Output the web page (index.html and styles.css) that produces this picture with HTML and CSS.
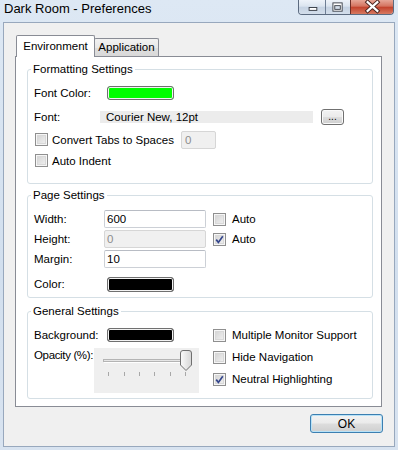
FILE: index.html
```html
<!DOCTYPE html>
<html>
<head>
<meta charset="utf-8">
<link rel="stylesheet" href="styles.css">
</head>
<body>
<div class="window">
  <div class="titlebar">
    <span class="title">Dark Room - Preferences</span>
    <div class="caption">
      <div class="cbtn cmin"><svg width="27" height="15" viewBox="0 0 27 15"><rect x="10.5" y="7.5" width="8" height="3" fill="#fff" stroke="#3a3f48"/></svg></div>
      <div class="cbtn cmax"><svg width="26" height="15" viewBox="0 0 26 15"><rect x="7.5" y="2.5" width="10" height="9" fill="#fff" stroke="#3a3f48"/><rect x="9.5" y="5.5" width="6" height="4" fill="#d5dfeb" stroke="#3a3f48"/></svg></div>
      <div class="cbtn cclose"><svg width="43" height="15" viewBox="0 0 43 15"><path d="M17 2 L27 11 M27 2 L17 11" stroke="#4a2420" stroke-width="4.2" stroke-linecap="square" fill="none"/><path d="M17 2 L27 11 M27 2 L17 11" stroke="#fff" stroke-width="2.2" stroke-linecap="square" fill="none"/></svg></div>
    </div>
  </div>
  <div class="client">
    <div class="tabs">
      <div class="tab tab-active">Environment</div>
      <div class="tab tab-app">Application</div>
    </div>
    <div class="panel">
      <fieldset class="group g-format">
        <legend>Formatting Settings</legend>
        <div class="format-grid">
          <span class="lbl">Font Color:</span>
          <span class="swatch swatch-green"></span>
          <span></span>
          <span class="lbl">Font:</span>
          <span class="fontfield">Courier New, 12pt</span>
          <button class="btn btn-dots">...</button>
          <div class="span-all">
            <span class="cb cb-f"></span>
            <span class="cb-text cb-text-convert">Convert Tabs to Spaces</span>
            <span class="input input-disabled input-tabs">0</span>
          </div>
          <div class="span-all">
            <span class="cb cb-f"></span>
            <span class="cb-text">Auto Indent</span>
          </div>
        </div>
      </fieldset>
      <fieldset class="group g-page">
        <legend>Page Settings</legend>
        <div class="page-grid">
          <span class="lbl">Width:</span>
          <span class="input">600</span>
          <div class="check"><span class="cb"></span><span class="cb-text">Auto</span></div>
          <span class="lbl">Height:</span>
          <span class="input input-disabled">0</span>
          <div class="check"><span class="cb cb-checked"><svg width="11" height="11" viewBox="0 0 11 11"><path d="M2.2 5.6 L4.4 8.4 L8.8 2.2" stroke="#34468c" stroke-width="1.7" fill="none"/></svg></span><span class="cb-text">Auto</span></div>
          <span class="lbl">Margin:</span>
          <span class="input">10</span>
          <span></span>
          <span class="lbl">Color:</span>
          <span class="swatch swatch-black swatch-page"></span>
          <span></span>
        </div>
      </fieldset>
      <fieldset class="group g-general">
        <legend>General Settings</legend>
        <div class="general">
          <div class="gen-left">
            <div class="gen-row">
              <span class="lbl lbl-bg">Background:</span>
              <span class="swatch swatch-black"></span>
            </div>
            <div class="gen-row gen-opacity">
              <span class="lbl lbl-op">Opacity (%):</span>
              <svg class="slider" width="105" height="45" viewBox="0 0 105 45">
                <rect x="0" y="0" width="105" height="45" fill="#efefef"/>
                <rect x="9.5" y="11.5" width="83" height="2" fill="#e6e6e6" stroke="#b4b4b4"/>
                <line x1="10" y1="14.5" x2="92" y2="14.5" stroke="#ffffff"/>
                <g stroke="#a8a8a8" stroke-width="1">
                  <line x1="14.5" y1="24" x2="14.5" y2="28"/>
                  <line x1="30.5" y1="24" x2="30.5" y2="28"/>
                  <line x1="45.5" y1="24" x2="45.5" y2="28"/>
                  <line x1="60.5" y1="24" x2="60.5" y2="28"/>
                  <line x1="76.5" y1="24" x2="76.5" y2="28"/>
                  <line x1="91.5" y1="24" x2="91.5" y2="28"/>
                </g>
                <defs><linearGradient id="th" x1="0" y1="0" x2="1" y2="0"><stop offset="0" stop-color="#fbfbfb"/><stop offset="1" stop-color="#d6d6d6"/></linearGradient></defs>
                <path d="M89 2.5 H95 Q97.5 2.5 97.5 5 V17 L92 22.5 L86.5 17 V5 Q86.5 2.5 89 2.5 Z" fill="url(#th)" stroke="#6f6f6f"/>
              </svg>
            </div>
          </div>
          <div class="gen-right">
            <div class="check gen-check"><span class="cb"></span><span class="cb-text">Multiple Monitor Support</span></div>
            <div class="check gen-check"><span class="cb"></span><span class="cb-text">Hide Navigation</span></div>
            <div class="check gen-check"><span class="cb cb-checked"><svg width="11" height="11" viewBox="0 0 11 11"><path d="M2.2 5.6 L4.4 8.4 L8.8 2.2" stroke="#34468c" stroke-width="1.7" fill="none"/></svg></span><span class="cb-text">Neutral Highlighting</span></div>
          </div>
        </div>
      </fieldset>
    </div>
    <div class="footer">
      <button class="btn btn-ok">OK</button>
    </div>
  </div>
</div>
</body>
</html>
```
FILE: styles.css
```css
* { box-sizing: border-box; }
body {
  margin: 0;
  font-family: "Liberation Sans", Arial, sans-serif;
  font-size: 11.5px;
  color: #000;
}
.window {
  width: 398px;
  height: 450px;
  background: linear-gradient(#dde8f4, #d2dfee 60%, #d8e3f0);
  display: flex;
  flex-direction: column;
}
.titlebar {
  height: 22px;
  display: flex;
  align-items: flex-start;
  flex: none;
}
.title {
  font-size: 13px;
  line-height: 18px;
  padding-left: 4px;
  color: #000;
}
.caption {
  margin-left: auto;
  margin-right: 4px;
  display: flex;
  height: 15px;
  border: 1px solid #5c6b80;
  border-top: none;
  border-radius: 0 0 4px 4px;
  overflow: hidden;
}
.cbtn { height: 14px; display: flex; }
.cbtn svg { display: block; }
.cmin {
  width: 27px;
  background: linear-gradient(#eef3f9, #dbe4ef 45%, #c5d2e2 50%, #d3deeb);
  border-right: 1px solid #6e7e94;
}
.cmax {
  width: 25px;
  background: linear-gradient(#eef3f9, #dbe4ef 45%, #c5d2e2 50%, #d3deeb);
  border-right: 1px solid #6e2e26;
}
.cclose {
  width: 42px;
  background: linear-gradient(#e6a697, #d4735f 45%, #c2412b 50%, #d77a62);
}
.client {
  flex: 1;
  margin: 0 3px 3px 3px;
  background: #f0f0f0;
  border: 1px solid #98a8bd;
  display: flex;
  flex-direction: column;
}
.tabs {
  display: flex;
  align-items: flex-end;
  height: 21px;
  margin: 12px 0 0 12px;
}
.tab {
  height: 18px;
  border: 1px solid #898c95;
  border-bottom: none;
  text-align: center;
  line-height: 17px;
}
.tab-active {
  width: 79px;
  height: 22px;
  line-height: 20px;
  margin-bottom: -1px;
  background: #fff;
  position: relative;
  z-index: 1;
  border-radius: 2px 2px 0 0;
}
.tab-app {
  width: 65px;
  margin-left: -1px;
  background: linear-gradient(#f2f2f2, #e8e8e8 50%, #dedede 51%, #d9d9d9);
  border-radius: 2px 2px 0 0;
}
.panel {
  margin-left: 11px;
  width: 367px;
  height: 351px;
  border: 1px solid #898c95;
  background: #fff;
  display: flex;
  flex-direction: column;
}
.group {
  margin: 0 0 0 11px;
  padding: 0;
  width: 346px;
  border: 1px solid #d5dfe5;
  border-radius: 3px;
  min-width: 0;
}
.group legend {
  padding: 0 2px;
  margin-left: 3px;
  line-height: 14px;
}
.g-format { margin-top: 5px; height: 122px; }
.g-page { margin-top: 4px; height: 110px; }
.g-general { margin-top: 6px; height: 95px; }

.lbl { white-space: nowrap; line-height: 14px; }

.format-grid {
  display: grid;
  grid-template-columns: 66px 221px 23px;
  grid-template-rows: 21px 27px 19px 23px;
  align-items: center;
  padding: 6px 0 0 6px;
}
.span-all {
  grid-column: 1 / -1;
  display: flex;
  align-items: center;
}
.swatch {
  display: block;
  width: 67px;
  height: 14px;
  border: 1px solid #707070;
  border-radius: 3px;
  box-shadow: inset 0 0 0 1px #f2f2f2;
}
.swatch-green { background: #00ff00; margin-left: 7px; }
.swatch-black { background: #000; }
.swatch-page { margin-left: 3px; height: 15px; }
.fontfield {
  width: 213px;
  height: 12px;
  line-height: 12px;
  background: #ececec;
  padding-left: 6px;
  white-space: nowrap;
}
.btn {
  font: inherit;
  color: #000;
  padding: 0;
  border: 1px solid #707070;
  border-radius: 3px;
  background: linear-gradient(#f3f3f3, #ebebeb 48%, #dddddd 52%, #cfcfcf);
  box-shadow: inset 0 0 0 1px #fafafa;
}
.btn-dots {
  width: 23px;
  height: 16px;
  font-size: 10px;
  line-height: 12px;
}
.cb {
  width: 13px;
  height: 13px;
  flex: none;
  border: 1px solid #8f8f8f;
  background: linear-gradient(135deg, #d0d0d0, #f4f4f4);
  box-shadow: inset 0 0 0 1px #f6f6f6, inset 0 0 0 2px #d8d8d8;
  display: flex;
  align-items: center;
  justify-content: center;
}
.cb svg { display: block; }
.cb-f { margin-left: 1px; margin-right: 4px; }
.cb-text { white-space: nowrap; line-height: 14px; }
.cb-text-convert { width: 129px; }
.input {
  display: block;
  height: 18px;
  border: 1px solid #ccd0d6;
  border-top-color: #b8bcc4;
  border-radius: 2px;
  background: #fff;
  padding: 0 2px;
  line-height: 16px;
}
.input-disabled {
  background: #f0f0f0;
  border-color: #d6d6d6;
  color: #8d8d8d;
}
.input-tabs { width: 35px; height: 18px; padding-left: 3px; }

.page-grid {
  display: grid;
  grid-template-columns: 63px 102px auto;
  grid-template-rows: 20px 20px 20px 30px;
  column-gap: 7px;
  align-items: center;
  padding: 7px 0 0 6px;
}
.check {
  display: flex;
  align-items: center;
}
.check .cb { margin-right: 6px; }

.general {
  display: flex;
  padding: 6px 0 0 6px;
}
.gen-left {
  width: 172px;
  display: flex;
  flex-direction: column;
}
.gen-row {
  display: flex;
  align-items: center;
  height: 22px;
}
.lbl-bg { width: 73px; }
.gen-opacity {
  margin-top: 2px;
  height: 45px;
  align-items: flex-start;
}
.lbl-op { width: 60px; flex: none; letter-spacing: -0.35px; }
.slider { display: block; flex: none; }
.gen-right {
  margin-left: 7px;
  display: flex;
  flex-direction: column;
}
.gen-check { height: 22px; }

.footer {
  display: flex;
  justify-content: flex-end;
  margin: 7px 11px 0 0;
}
.btn-ok {
  width: 73px;
  height: 19px;
  line-height: 16px;
  border-color: #3c7fb1;
  box-shadow: inset 0 0 0 1px #b8e2f7;
  font-size: 12px;
}
```
